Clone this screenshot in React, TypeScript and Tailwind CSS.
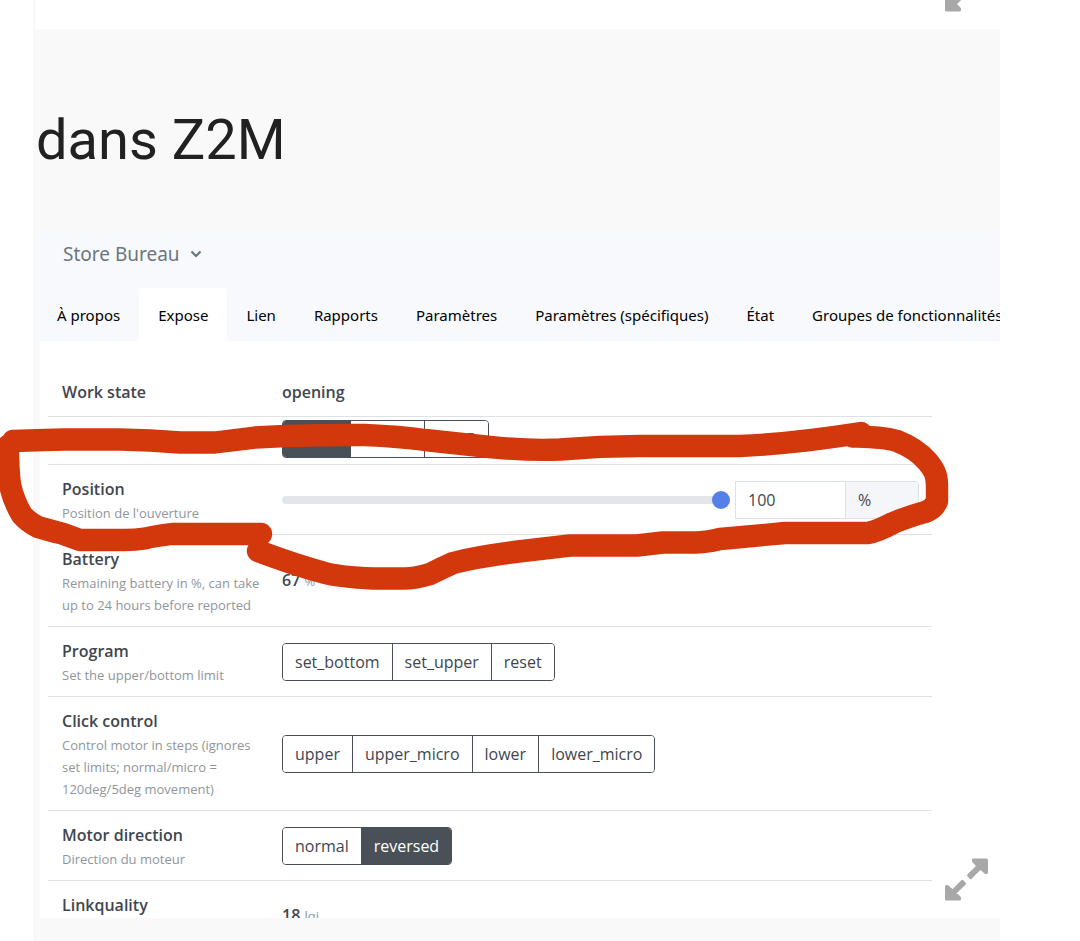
import React from "react";

const tabs = [
  "À propos",
  "Expose",
  "Lien",
  "Rapports",
  "Paramètres",
  "Paramètres (spécifiques)",
  "État",
  "Groupes de fonctionnalités",
];

function ExpandIcon() {
  const arrow =
    "M28.5 2 H41.5 V14.5 L40.5 14.500 L35.500 9.800 L25.6 19.6 L23.6 17.2 L33 8 L28.500 3.200 Z";
  return (
    <button
      type="button"
      aria-label="Agrandir"
      className="absolute right-3 bottom-[17px] size-[43px] text-[#a8a8a8]"
    >
      <svg viewBox="0 0 43 43" className="size-full" fill="currentColor" stroke="currentColor" strokeWidth="3" strokeLinejoin="round">
        <path d={arrow} />
        <path d={arrow} transform="rotate(180 21.5 21.5)" />
      </svg>
    </button>
  );
}

function ButtonGroup({ label, options, active }: { label: string; options: string[]; active?: string }) {
  return (
    <div role="group" aria-label={label} className="flex w-fit overflow-hidden rounded border border-[#495057]">
      {options.map((option) => (
        <button
          key={option}
          type="button"
          aria-pressed={option === active}
          className={
            option === active
              ? "h-9 border-r border-[#495057] bg-[#495057] px-3 text-white last:border-r-0"
              : "h-9 border-r border-[#495057] bg-white px-3 last:border-r-0"
          }
        >
          {option}
        </button>
      ))}
    </div>
  );
}

function Row({ title, note, className = "py-3", children }: {
  title?: string;
  note?: string;
  className?: string;
  children: React.ReactNode;
}) {
  return (
    <div className={`grid grid-cols-[220px_1fr] items-center border-b border-[#dee2e6] pr-[13px] pl-[14px] ${className}`}>
      <div className={note ? "-mb-0.5 self-start pr-5" : "-mb-px self-start pr-5"}>
        {title && <h2 className="font-semibold leading-6">{title}</h2>}
        {note && <p className="mt-px text-[13px] leading-[22px] text-[#8f969c]">{note}</p>}
      </div>
      <div className="min-w-0">{children}</div>
    </div>
  );
}

function Unit({ value, unit }: { value: string; unit: string }) {
  return (
    <p className="leading-6">
      <strong className="font-semibold">{value}</strong>{" "}
      <span className="text-[13px] text-[#8f969c]">{unit}</span>
    </p>
  );
}

function Annotation() {
  return (
    <svg
      aria-hidden="true"
      viewBox="0 415 960 185"
      className="pointer-events-none absolute top-[415px] left-0 h-[185px] w-[960px]"
      fill="none"
      stroke="#d3380d"
      strokeWidth="22.4"
      strokeLinecap="round"
      strokeLinejoin="round"
    >
      <path d="M13 441 L45 440 Q55 439.500 65 439.500 H120 Q150 440 180 442.500 H215 Q235 440 255 437.500 Q300 434.500 365 435 Q400 436.500 425 440 L490 447 Q530 451 560 449.500 Q600 446 640 446 H740 Q790 444 861 433" />
      <path d="M853 436.500 C870 437 884 437 897 441 C910 446 920 453 927 461 C934 469 937 475 937 485 V501 Q934 509 925 512 Q910 516 893 523 Q878 531 868 533 H785 L720 539 Q705 542.500 695 542.500 H663 L637 545.500 H570 L527 550.500 Q480 556 453 563 Q440 569 430 574 Q415 578.500 405 578.500 H373 Q340 577 325 573 Q295 565 258 551" />
      <path d="M261 534 H172 Q155 536 145 538.500 Q135 540 125 540 H80 L62 533.500 Q48 530 38 527 Q28 522 22 515 Q14 502 10 485 Q8 470 8 446" />
    </svg>
  );
}

export default function App() {
  return (
    <main className="relative overflow-hidden bg-white font-['Open_Sans','Noto_Sans',sans-serif] text-base text-[#3f464e]">
      <div className="mr-20 ml-[33px] bg-[#f9f9f9]">
        <div className="relative ml-[3px] h-[29px] bg-white">
          <ExpandIcon />
        </div>
        <h1 className="flex h-[203px] items-center pt-[18px] pl-[3px] font-[Roboto,sans-serif] text-[56px] leading-[66px] text-[#212121]">
          dans Z2M
        </h1>

        <section className="relative ml-[3px] h-[686px] overflow-hidden bg-[#f7f9fd]">
          <header className="h-14 pt-2 pl-[27px] font-['Noto_Sans',sans-serif]">
            <button type="button" className="flex items-center gap-[10px] text-[19px] leading-7 text-[#6c757d]">
              Store Bureau
              <svg viewBox="0 0 12 8" className="h-2 w-3" fill="none" stroke="currentColor" strokeWidth="2.2">
                <path d="M1.500 1.500 L6 6 L10.500 1.500" />
              </svg>
            </button>
          </header>

          <nav className="ml-0.5 flex overflow-hidden font-['Noto_Sans',sans-serif] text-[15px] whitespace-nowrap text-black">
            {tabs.map((tab) => (
              <a
                key={tab}
                href="#"
                className={
                  tab === "Expose"
                    ? "rounded-t bg-white px-[19px] pt-[15px] pb-[14px] leading-6"
                    : "px-[19px] pt-[15px] pb-[14px] leading-6"
                }
              >
                {tab}
              </a>
            ))}
          </nav>

          <div className="ml-1 bg-white pt-[27px] pr-[68px] pb-10 pl-2">
            <Row title="Work state">
              <strong className="block font-semibold leading-6">opening</strong>
            </Row>
            <Row className="h-12 pb-[3px]">
              <ButtonGroup label="State" options={["OPEN", "CLOSE", "STOP"]} active="OPEN" />
            </Row>
            <Row title="Position" note="Position de l'ouverture">
              <div className="flex items-center gap-[5px]">
                <input
                  type="range"
                  aria-label="Position"
                  min={0}
                  max={100}
                  defaultValue={100}
                  className="h-2 min-w-0 flex-1 appearance-none rounded-full bg-[#e2e6eb] [&::-webkit-slider-thumb]:size-[18px] [&::-webkit-slider-thumb]:appearance-none [&::-webkit-slider-thumb]:rounded-full [&::-webkit-slider-thumb]:bg-[#5480e8]"
                />
                <div className="flex h-[38px] w-[184px] overflow-hidden rounded-r border border-[#dbe1e8]">
                  <input
                    type="text"
                    aria-label="Valeur de position"
                    defaultValue="100"
                    className="w-[110px] border-r border-[#dbe1e8] bg-white px-3"
                  />
                  <span className="flex flex-1 items-center bg-[#f4f6f9] px-3">%</span>
                </div>
              </div>
            </Row>
            <Row title="Battery" note="Remaining battery in %, can take up to 24 hours before reported">
              <Unit value="67" unit="%" />
            </Row>
            <Row title="Program" note="Set the upper/bottom limit">
              <ButtonGroup label="Program" options={["set_bottom", "set_upper", "reset"]} />
            </Row>
            <Row title="Click control" note="Control motor in steps (ignores set limits; normal/micro = 120deg/5deg movement)">
              <ButtonGroup label="Click control" options={["upper", "upper_micro", "lower", "lower_micro"]} />
            </Row>
            <Row title="Motor direction" note="Direction du moteur">
              <ButtonGroup label="Motor direction" options={["normal", "reversed"]} active="reversed" />
            </Row>
            <Row title="Linkquality" className="min-h-[70px] py-3">
              <Unit value="18" unit="lqi" />
            </Row>
          </div>
          <ExpandIcon />
        </section>
        <div className="h-[23px]" />
      </div>
      <Annotation />
    </main>
  );
}
